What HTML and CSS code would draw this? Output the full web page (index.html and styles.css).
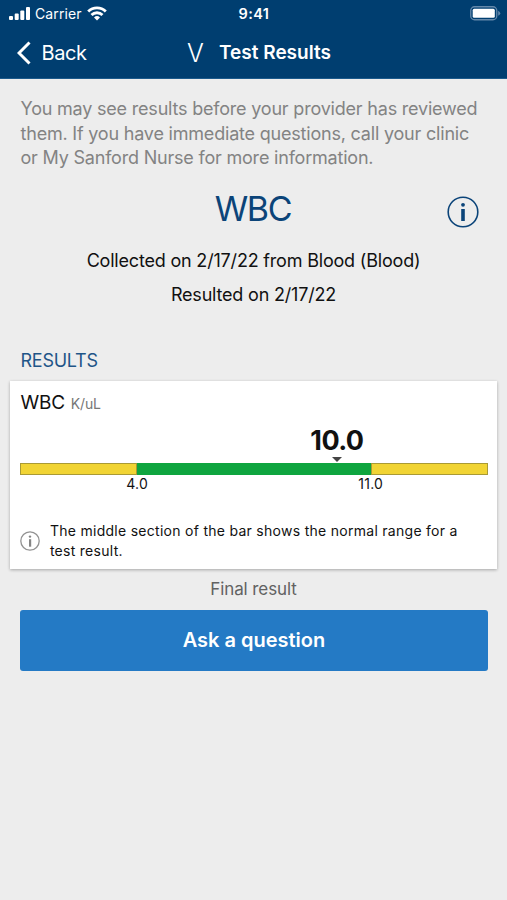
FILE: index.html
```html
<!DOCTYPE html>
<html lang="en">
<head>
<meta charset="utf-8">
<title>Test Results</title>
<link rel="stylesheet" href="styles.css">
</head>
<body>
<header class="header">
  <div class="status">
    <div class="status-left">
      <svg class="signal" width="22" height="14" viewBox="0 0 22 14" fill="#fff"><rect x="0" y="9" width="4" height="4" rx="1"/><rect x="5.700" y="6.500" width="4" height="6.500" rx="1"/><rect x="11.300" y="3.500" width="4" height="9.500" rx="1"/><rect x="17" y="0" width="4" height="13" rx="1"/></svg>
      <span class="carrier">Carrier</span>
      <svg class="wifi" width="20" height="15" viewBox="0 0 20 15" fill="none" stroke="#fff" stroke-width="2.800"><path d="M1.200 5.600a12.400 12.400 0 0 1 17.600 0"/><path d="M4.500 9a7.800 7.800 0 0 1 11 0"/><path d="M10 14.500l-3-3a4.300 4.300 0 0 1 6 0z" fill="#fff" stroke="none"/></svg>
    </div>
    <span class="clock">9:41</span>
    <svg class="battery" width="31" height="15" viewBox="0 0 31 15"><rect x=".75" y=".75" width="26" height="13" rx="3.800" fill="none" stroke="#6488aa" stroke-width="1.300"/><rect x="2.700" y="2.700" width="22.100" height="9.100" rx="1.500" fill="#fff"/><path d="M28.200 4.800q2 1 2 2.500t-2 2.500z" fill="#6488aa"/></svg>
  </div>
  <nav class="nav">
    <a class="back"><svg width="14" height="24" viewBox="0 0 14 24" fill="none" stroke="#fff" stroke-width="3"><path d="M12.500 1.500L2 12l10.500 10.500"/></svg>Back</a>
    <span class="avatar">V</span>
    <h1 class="nav-title">Test Results</h1>
  </nav>
</header>
<main class="main">
  <p class="notice">You may see results before your provider has reviewed<br>them. If you have immediate questions, call your clinic<br>or My Sanford Nurse for more information.</p>
  <div class="title-row">
    <h2 class="title">WBC</h2>
    <svg class="info" width="32" height="32" viewBox="0 0 32 32"><circle cx="16" cy="16" r="14.800" fill="none" stroke="#0b4479" stroke-width="1.600"/><circle cx="16" cy="8.800" r="1.900" fill="#0b4479"/><path d="M14.200 13h3.600v12h-3.600z" fill="#0b4479"/></svg>
  </div>
  <p class="meta">Collected on 2/17/22 from Blood (Blood)</p>
  <p class="meta">Resulted on 2/17/22</p>
  <h3 class="section">RESULTS</h3>
  <section class="card">
    <div class="component"><span class="name">WBC</span><span class="unit">K/uL</span></div>
    <div class="value"><span>10.0</span><i class="pointer"></i></div>
    <div class="range"><i class="out"></i><i class="normal"></i><i class="out"></i></div>
    <div class="labels"><span>4.0</span><span>11.0</span></div>
    <div class="hint">
      <svg width="20" height="20" viewBox="0 0 20 20"><circle cx="10" cy="10" r="9.200" fill="none" stroke="#929292" stroke-width="1.300"/><circle cx="10" cy="5.600" r="1.200" fill="#858585"/><path d="M9 8.200h2.200v7.500h-2.200z" fill="#858585"/></svg>
      <p>The middle section of the bar shows the normal range for a<br>test result.</p>
    </div>
  </section>
  <p class="final">Final result</p>
  <button class="ask">Ask a question</button>
</main>
</body>
</html>
```

FILE: styles.css
```css
* { box-sizing: border-box; }
body { margin: 0; min-height: 900px; background: #ededed; color: #111; font-family: Inter, "Liberation Sans", sans-serif; }
p, h1, h2, h3 { margin: 0; font-weight: 400; }
.header { height: 79px; background: #003e70; border-bottom: 1px solid #1c5a8c; color: #fff; }
.status { display: grid; grid-template-columns: 1fr auto 1fr; align-items: center; height: 27px; padding: 0 6px 0 9px; }
.status-left { display: flex; align-items: center; }
.carrier { margin: 0 5px 0 4px; font-size: 14px; letter-spacing: .1px; }
.clock { position: relative; left: -1px; font-size: 14.500px; font-weight: 600; letter-spacing: .4px; }
.battery { justify-self: end; }
.nav { display: flex; align-items: center; height: 51px; padding-left: 17px; }
.back { display: flex; align-items: center; width: 170px; gap: 10.500px; font-size: 20px; letter-spacing: -.4px; }
.avatar { width: 32px; font-size: 25px; font-weight: 300; }
.nav-title { font-size: 19px; font-weight: 600; }
.notice { padding: 18px 0 0 20.500px; color: #838383; font-size: 18px; line-height: 24.500px; letter-spacing: -.2px; white-space: nowrap; }
.title-row { display: grid; grid-template-columns: 60px 1fr 60px; align-items: center; height: 60px; margin-top: 8px; }
.title { grid-column: 2; color: #0b4479; font-size: 34px; letter-spacing: -1.300px; text-indent: -1px; text-align: center; }
.info { margin-top: 7px; }
.meta { font-size: 18px; line-height: 34px; letter-spacing: -.19px; text-align: center; }
.title-row + .meta { margin-top: 5px; }
.section { margin: 35px 20.500px 6.500px; color: #1f5587; font-size: 18px; line-height: 28px; letter-spacing: -.25px; }
.card { margin: 0 10px 0 10.400px; height: 188px; padding: 10px 9.500px 0 10px; background: #fff; box-shadow: 0 1px 3px rgba(0,0,0,.3); }
.component { display: flex; align-items: baseline; gap: 6px; height: 33px; }
.name { font-size: 19px; letter-spacing: -.2px; }
.unit { color: #777; font-size: 14px; letter-spacing: -.2px; }
.value { display: flex; flex-direction: column; align-items: center; width: 86px; margin-left: 273.500px; height: 39px; font-size: 27px; font-weight: 700; line-height: 33px; letter-spacing: -.6px; }
.pointer { border: 5px solid transparent; border-top-color: #444; border-bottom: 0; }
.range { display: grid; grid-template-columns: 1fr 2fr 1fr; height: 12px; }
.out { background: #f1d434; border: 1px solid #a99a35; }
.normal { background: #0fa53f; }
.labels { display: grid; grid-template-columns: 1fr 1fr; text-align: center; font-size: 14px; line-height: 18px; letter-spacing: .2px; }
.hint { display: flex; align-items: center; gap: 9.500px; margin-top: 28px; font-size: 14px; line-height: 19.500px; letter-spacing: .28px; white-space: nowrap; }
.final { color: #626262; font-size: 17px; line-height: 40.500px; letter-spacing: -.1px; text-align: center; }
.ask { display: block; width: 467.300px; height: 61px; margin-left: 20.300px; border: 0; border-radius: 3px; background: #247ac5; color: #fff; font: 600 20px Inter, sans-serif; }
```
